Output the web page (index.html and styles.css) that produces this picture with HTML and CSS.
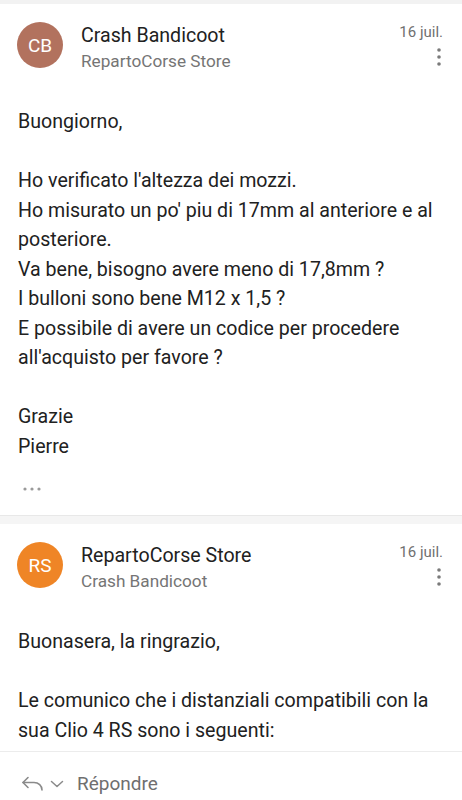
FILE: index.html
```html
<!DOCTYPE html>
<html lang="fr">

<head>
    <meta charset="UTF-8">
    <meta name="viewport" content="width=device-width, initial-scale=1.0">
    <title>Conversation</title>
    <link rel="stylesheet" href="styles.css">
</head>

<body>

    <div class="screen">
        <div class="thread">
            <div class="top-strip"></div>

            <!-- First message -->
            <div class="message">
                <div class="msg-header">
                    <div class="avatar avatar-cb">CB</div>
                    <div class="sender">
                        <div class="sender-name">Crash Bandicoot</div>
                        <div class="sender-to">RepartoCorse Store</div>
                    </div>
                    <div class="meta">
                        <div class="date">16 juil.</div>
                        <svg class="more" width="6" height="20" viewBox="0 0 6 20">
                            <circle cx="3" cy="3" r="1.8" />
                            <circle cx="3" cy="10" r="1.8" />
                            <circle cx="3" cy="17" r="1.8" />
                        </svg>
                    </div>
                </div>
                <div class="msg-body">
                    Buongiorno,<br>
                    <br>
                    Ho verificato l'altezza dei mozzi.<br>
                    Ho misurato un po' piu di 17mm al anteriore e al posteriore.<br>
                    Va bene, bisogno avere meno di 17,8mm ?<br>
                    I bulloni sono bene M12 x 1,5 ?<br>
                    E possibile di avere un codice per procedere all'acquisto per favore ?<br>
                    <br>
                    Grazie<br>
                    Pierre
                </div>
                <div class="quoted">
                    <svg width="18" height="4" viewBox="0 0 18 4">
                        <circle cx="2" cy="2" r="1.6" />
                        <circle cx="9" cy="2" r="1.6" />
                        <circle cx="16" cy="2" r="1.6" />
                    </svg>
                </div>
            </div>

            <div class="separator"></div>

            <!-- Second message -->
            <div class="message">
                <div class="msg-header">
                    <div class="avatar avatar-rs">RS</div>
                    <div class="sender">
                        <div class="sender-name">RepartoCorse Store</div>
                        <div class="sender-to">Crash Bandicoot</div>
                    </div>
                    <div class="meta">
                        <div class="date">16 juil.</div>
                        <svg class="more" width="6" height="20" viewBox="0 0 6 20">
                            <circle cx="3" cy="3" r="1.8" />
                            <circle cx="3" cy="10" r="1.8" />
                            <circle cx="3" cy="17" r="1.8" />
                        </svg>
                    </div>
                </div>
                <div class="msg-body">
                    Buonasera, la ringrazio,<br>
                    <br>
                    Le comunico che i distanziali compatibili con la sua Clio 4 RS sono i seguenti:
                </div>
            </div>
        </div>

        <div class="reply-bar">
            <svg class="reply-icon" width="23" height="15" viewBox="0 0 23 15">
                <path d="M7 1.5 L2 6.5 L7 11.5" />
                <path d="M2 6.5 H13 C17.5 6.5 21 9.5 21 14" />
            </svg>
            <svg class="reply-chevron" width="14" height="8" viewBox="0 0 14 8">
                <path d="M1.5 1.5 L7 6.5 L12.5 1.5" />
            </svg>
            <span class="reply-label">Répondre</span>
        </div>
    </div>

</body>

</html>
```

FILE: styles.css
```css
html, body {
    margin: 0;
    padding: 0;
}

body {
    font-family: 'Roboto', 'Noto Sans', sans-serif;
    background: white;
    color: #212121;
}

.screen {
    height: 100vh;
    display: flex;
    flex-direction: column;
    overflow: hidden;
}

.thread {
    flex: 1;
    overflow: hidden;
}

.top-strip {
    height: 4px;
    background: #f2f2f2;
}

.message {
    padding-bottom: 20px;
}

.msg-header {
    display: flex;
    align-items: flex-start;
    padding: 18px 19px 0 17px;
}

.avatar {
    width: 46px;
    height: 46px;
    border-radius: 50%;
    color: white;
    font-size: 19px;
    display: flex;
    align-items: center;
    justify-content: center;
    flex-shrink: 0;
}

.avatar-cb {
    background: #b2725e;
}

.avatar-rs {
    background: #ef8526;
}

.sender {
    flex: 1;
    margin-left: 18px;
    margin-top: 1px;
}

.sender-name {
    font-size: 19.6px;
    line-height: 25px;
    color: #212121;
}

.sender-to {
    font-size: 17.2px;
    line-height: 22px;
    margin-top: 2px;
    color: #757575;
}

.meta {
    display: flex;
    flex-direction: column;
    align-items: flex-end;
    margin-top: 1px;
}

.date {
    font-size: 15px;
    line-height: 18px;
    color: #707070;
}

.more {
    fill: #7a7a7a;
    margin-top: 6px;
    margin-right: 1px;
}

.msg-body {
    padding: 35px 18px 0 18px;
    font-size: 19.6px;
    line-height: 29.5px;
}

.quoted {
    margin: 22px 0 0 23px;
    height: 12px;
    display: flex;
    align-items: center;
    fill: #9a9a9a;
}

.separator {
    height: 8px;
    background: #f5f5f5;
    border-top: 1px solid #e8e8e8;
}

.reply-bar {
    height: 49px;
    box-sizing: border-box;
    border-top: 1px solid #ececec;
    display: flex;
    align-items: center;
    padding: 15px 0 0 21px;
    background: white;
}

.reply-icon {
    fill: none;
    stroke: #8a8a8a;
    stroke-width: 1.6;
    stroke-linecap: round;
    stroke-linejoin: round;
}

.reply-chevron {
    margin-left: 6px;
    fill: none;
    stroke: #8a8a8a;
    stroke-width: 1.5;
    stroke-linecap: round;
    stroke-linejoin: round;
}

.reply-label {
    margin-left: 13px;
    font-size: 19px;
    line-height: 22px;
    color: #6f6f6f;
}
```
